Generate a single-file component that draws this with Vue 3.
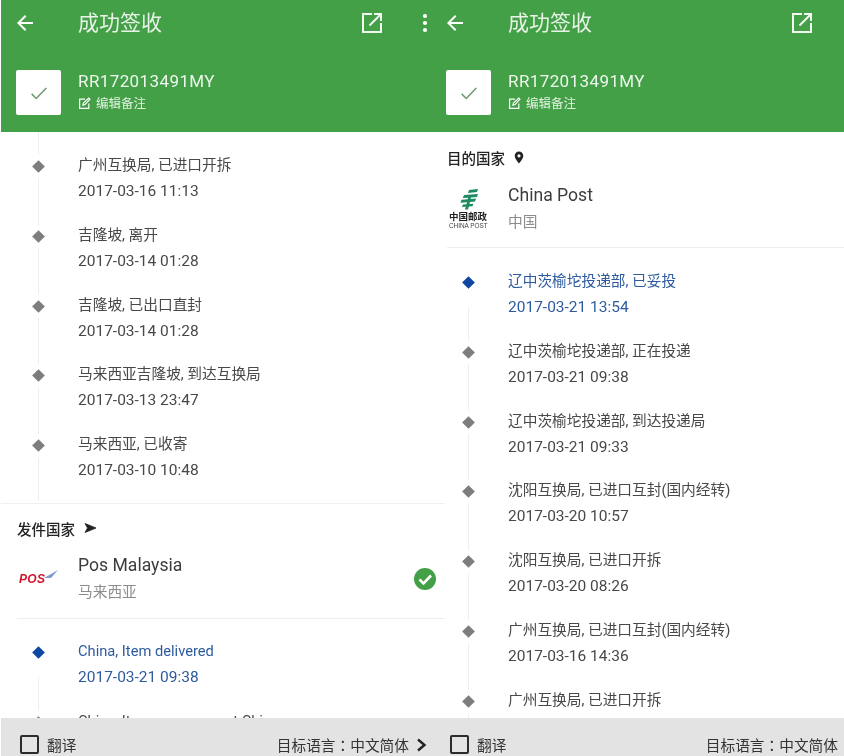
<script setup>
const leftTop = [
  { place: '广州互换局, 已进口开拆', time: '2017-03-16 11:13' },
  { place: '吉隆坡, 离开', time: '2017-03-14 01:28' },
  { place: '吉隆坡, 已出口直封', time: '2017-03-14 01:28' },
  { place: '马来西亚吉隆坡, 到达互换局', time: '2017-03-13 23:47' },
  { place: '马来西亚, 已收寄', time: '2017-03-10 10:48' }
]

const leftBottom = [
  { place: 'China, Item delivered', time: '2017-03-21 09:38', active: true },
  { place: 'China, Item necessary at China', time: '2017-03-21 08:00' }
]

const rightEvents = [
  { place: '辽中茨榆坨投递部, 已妥投', time: '2017-03-21 13:54', active: true },
  { place: '辽中茨榆坨投递部, 正在投递', time: '2017-03-21 09:38' },
  { place: '辽中茨榆坨投递部, 到达投递局', time: '2017-03-21 09:33' },
  { place: '沈阳互换局, 已进口互封(国内经转)', time: '2017-03-20 10:57' },
  { place: '沈阳互换局, 已进口开拆', time: '2017-03-20 08:26' },
  { place: '广州互换局, 已进口互封(国内经转)', time: '2017-03-16 14:36' },
  { place: '广州互换局, 已进口开拆', time: '2017-03-16 11:13' }
]
</script>

<template>
  <div class="page">
    <!-- left phone -->
    <section class="phone left">
      <header class="head">
        <div class="toolbar">
          <svg class="back" width="24" height="24" viewBox="0 0 24 24"><path d="M20 11H7.800l5.600-5.600L12 4l-8 8 8 8 1.400-1.400L7.800 13H20z" fill="#fff" /></svg>
          <h1>成功签收</h1>
          <svg class="open" width="24" height="24" viewBox="0 0 24 24"><path d="M20 20H4V4h8V2H2v20h20V12h-2zM14 2v2h4.600L8.800 13.800l1.400 1.400L20 5.400V10h2V2z" fill="#f1f8f1" /></svg>
          <svg class="more" width="6" height="20" viewBox="0 0 6 20"><circle cx="3" cy="3" r="2.100" fill="#fff" /><circle cx="3" cy="10" r="2.100" fill="#fff" /><circle cx="3" cy="17" r="2.100" fill="#fff" /></svg>
        </div>
        <div class="info">
          <div class="thumb">
            <svg width="22" height="22" viewBox="0 0 24 24"><path d="M4 13l5 5L20 6.500" fill="none" stroke="#6f9a72" stroke-width="1.700" /></svg>
          </div>
          <div>
            <div class="number">RR172013491MY</div>
            <div class="note">
              <svg width="13" height="13" viewBox="0 0 24 24"><path d="M20 12v9H3V4h10M9 15l1-4L20 2l2 2-9 10z" fill="none" stroke="#fff" stroke-width="2.200" /></svg>
              编辑备注
            </div>
          </div>
        </div>
      </header>

      <div class="body">
        <ul class="events first">
          <li v-for="e in leftTop" :key="e.place + e.time" class="event">
            <span class="dot"></span>
            <div class="place">{{ e.place }}</div>
            <div class="time">{{ e.time }}</div>
          </li>
        </ul>
        <div class="carrier-block sender">
          <div class="label">
            发件国家
            <svg width="13" height="12" viewBox="0 0 13 12"><path d="M1 1.500l11 4.500-11 4.500 2.500-4.500z" fill="#222" stroke="#222" stroke-width="0.800" /></svg>
          </div>
          <div class="carrier">
            <div class="logo malaysia">
              <span class="pos">POS</span>
              <svg class="wing" width="15" height="10" viewBox="0 0 15 10"><path d="M0 9L14 1 7 9z" fill="#7f9bcf" /></svg>
            </div>
            <div class="carrier-text">
              <div class="name">Pos Malaysia</div>
              <div class="country">马来西亚</div>
            </div>
            <svg class="ok" width="24" height="24" viewBox="0 0 24 24"><circle cx="12" cy="12" r="11" fill="#43a047" /><path d="M6.500 12.500l4 4 7.500-8" fill="none" stroke="#fff" stroke-width="2.600" /></svg>
          </div>
        </div>
        <ul class="events after-carrier">
          <li v-for="e in leftBottom" :key="e.place" class="event" :class="{ active: e.active }">
            <span class="dot"></span>
            <div class="place">{{ e.place }}</div>
            <div class="time">{{ e.time }}</div>
          </li>
        </ul>
      </div>

      <footer class="bar">
        <span class="box"></span>
        <span class="translate">翻译</span>
        <span class="target">目标语言：中文简体</span>
        <svg class="chev" width="12" height="14" viewBox="0 0 12 14"><path d="M2 1.500L8.500 7 2 12.500" fill="none" stroke="#222" stroke-width="2.400" /></svg>
      </footer>
    </section>

    <!-- right phone -->
    <section class="phone right">
      <header class="head">
        <div class="toolbar">
          <svg class="back" width="24" height="24" viewBox="0 0 24 24"><path d="M20 11H7.800l5.600-5.600L12 4l-8 8 8 8 1.400-1.400L7.800 13H20z" fill="#fff" /></svg>
          <h1>成功签收</h1>
          <svg class="open" width="24" height="24" viewBox="0 0 24 24"><path d="M20 20H4V4h8V2H2v20h20V12h-2zM14 2v2h4.600L8.800 13.800l1.400 1.400L20 5.400V10h2V2z" fill="#f1f8f1" /></svg>
        </div>
        <div class="info">
          <div class="thumb">
            <svg width="22" height="22" viewBox="0 0 24 24"><path d="M4 13l5 5L20 6.500" fill="none" stroke="#6f9a72" stroke-width="1.700" /></svg>
          </div>
          <div>
            <div class="number">RR172013491MY</div>
            <div class="note">
              <svg width="13" height="13" viewBox="0 0 24 24"><path d="M20 12v9H3V4h10M9 15l1-4L20 2l2 2-9 10z" fill="none" stroke="#fff" stroke-width="2.200" /></svg>
              编辑备注
            </div>
          </div>
        </div>
      </header>

      <div class="body">
        <div class="carrier-block">
          <div class="label">
            目的国家
            <svg width="10" height="13" viewBox="0 0 10 13"><path d="M5 .5A4.300 4.300 0 0 0 .7 4.800C.7 8 5 12.500 5 12.500S9.300 8 9.300 4.800A4.300 4.300 0 0 0 5 .5zm0 5.900a1.600 1.600 0 1 1 0-3.200 1.600 1.600 0 0 1 0 3.200z" fill="#222" /></svg>
          </div>
          <div class="carrier">
            <div class="logo cn">
              <svg width="24" height="22" viewBox="0 0 24 22"><path d="M12 1l9-1-1 3-9 1zM7 6l14-1-1 3-6 .4-.4 1.600 5.400-.4-1 3-5 .3-.6 2.100 4-.3-1 2.500-3.600.3-.8 3h-3l.8-2.800-3.800.3 1-2.500 3.500-.3.500-2-6.500.5 1-3 6.200-.4.400-1.600-5.300.4z" fill="#1f8a5f" /></svg>
              <span class="cn-name">中国邮政</span>
              <span class="cn-en">CHINA POST</span>
            </div>
            <div class="carrier-text">
              <div class="name">China Post</div>
              <div class="country">中国</div>
            </div>
          </div>
        </div>
        <ul class="events after-carrier">
          <li v-for="e in rightEvents" :key="e.place + e.time" class="event" :class="{ active: e.active }">
            <span class="dot"></span>
            <div class="place">{{ e.place }}</div>
            <div class="time">{{ e.time }}</div>
          </li>
        </ul>
      </div>

      <footer class="bar">
        <span class="box"></span>
        <span class="translate">翻译</span>
        <span class="target">目标语言：中文简体</span>
      </footer>
    </section>
  </div>
</template>

<style>
html, body {
  margin: 0;
  background: #fff;
}
</style>

<style scoped>
.page {
  display: flex;
  width: 844px;
  height: 756px;
  overflow: hidden;
  font-family: Roboto, "Noto Sans CJK SC", sans-serif;
  color: #484848;
  filter: blur(0.35px);
}

.phone {
  position: relative;
  display: flex;
  flex-direction: column;
  height: 756px;
  overflow: hidden;
  background: #fff;
}
.left {
  width: 444px;
  margin-left: 1px;
  --inset: 14px;
}
.right {
  width: 399px;
  --inset: 0px;
}

.head {
  flex: none;
  height: 132px;
  padding-left: var(--inset);
  background: #43a047;
  color: #fff;
}
.toolbar {
  display: flex;
  align-items: center;
  height: 46px;
}
.back {
  margin-left: -2px;
  flex: none;
}
.toolbar h1 {
  margin: 0 0 0 41px;
  font-size: 21px;
  font-weight: 400;
  line-height: 46px;
  width: 282px;
  flex: none;
  color: #e6f3e6;
}
.open {
  flex: none;
}
.more {
  flex: none;
  margin-left: 38px;
}

.info {
  display: flex;
  align-items: center;
  gap: 17px;
  padding: 24px 0 0 1px;
}
.thumb {
  display: flex;
  align-items: center;
  justify-content: center;
  width: 45px;
  height: 45px;
  border-radius: 2px;
  background: #fff;
}
.number {
  font-size: 17px;
  line-height: 22px;
  letter-spacing: 0.4px;
  margin-top: -2px;
  color: #eef7ee;
}
.note {
  display: flex;
  align-items: center;
  gap: 5px;
  margin-top: 2px;
  font-size: 12.500px;
  line-height: 20px;
  color: #e3f1e3;
}

.body {
  flex: 1;
  min-height: 0;
  overflow: hidden;
  padding-left: var(--inset);
}

.events {
  list-style: none;
  margin: 0;
  padding: 0;
}
.events.first {
  padding-top: 19px;
  padding-bottom: 3px;
  border-bottom: 1px solid #f0f0f0;
  margin-left: calc(0px - var(--inset));
  padding-left: var(--inset);
}
.events.after-carrier {
  padding-top: 19px;
}
.sender + .events.after-carrier {
  padding-top: 18px;
}
.event {
  position: relative;
  height: 69.800px;
  padding-left: 63px;
  box-sizing: border-box;
  padding-top: 1px;
}
.event::before {
  content: "";
  position: absolute;
  left: 23px;
  top: -19px;
  bottom: 0;
  width: 1px;
  background: #eeeeee;
}
.event.active::before {
  top: 40px;
}
.dot {
  position: absolute;
  left: 19px;
  top: 11px;
  width: 9px;
  height: 9px;
  background: #7d7d7d;
  transform: rotate(45deg);
  box-shadow: 0 0 0 4px #fff;
}
.place {
  font-size: 14.700px;
  line-height: 26px;
  white-space: nowrap;
}
.time {
  font-size: 15.500px;
  line-height: 26px;
}
.active .place,
.active .time {
  color: #2d5b9e;
}
.active .dot {
  background: #0d47a1;
}

.carrier-block {
  padding: 13px 0 0 2px;
}
.sender {
  padding-top: 12px;
}
.label {
  display: flex;
  align-items: center;
  gap: 9px;
  height: 25px;
  font-size: 14.500px;
  font-weight: 500;
  color: #222;
}
.carrier {
  display: flex;
  align-items: center;
  height: 78px;
  border-bottom: 1px solid #eee;
  box-sizing: border-box;
}
.logo {
  position: relative;
  flex: none;
  width: 61px;
  display: flex;
  flex-direction: column;
  align-items: flex-start;
}
.malaysia {
  padding-left: 2px;
  box-sizing: border-box;
}
.pos {
  font-family: "Liberation Sans", sans-serif;
  font-size: 12px;
  font-weight: 700;
  font-style: italic;
  letter-spacing: 0.3px;
  line-height: 14px;
  color: #d3142c;
}
.wing {
  position: absolute;
  top: -3px;
  left: 27px;
}
.cn {
  align-items: flex-start;
  padding-left: 2px;
  padding-top: 1px;
  width: 59px;
  margin-right: 2px;
  box-sizing: border-box;
}
.cn svg {
  margin-left: 8px;
}
.cn-name {
  font-size: 9.500px;
  font-weight: 700;
  line-height: 11px;
  color: #222;
  white-space: nowrap;
}
.cn-en {
  font-family: "Liberation Sans", sans-serif;
  font-size: 6.400px;
  line-height: 7px;
  color: #444;
  white-space: nowrap;
}
.carrier-text {
  flex: 1;
}
.name {
  font-size: 17.600px;
  line-height: 27px;
  color: #3c3c3c;
}
.country {
  font-size: 14.700px;
  line-height: 27px;
  color: #8c8c8c;
}
.ok {
  flex: none;
  margin-right: 8px;
}

.bar {
  position: absolute;
  left: 0;
  right: 0;
  bottom: 0;
  display: flex;
  align-items: center;
  height: 38px;
  padding: 15px 0 0 var(--inset);
  box-sizing: border-box;
  background: #e3e3e3;
  color: #333;
  font-size: 14.700px;
}
.box {
  flex: none;
  width: 15px;
  height: 15px;
  margin: 0 0 0 5px;
  border: 2px solid #2b2b2b;
  border-radius: 2px;
}
.translate {
  margin-left: 8px;
}
.target {
  margin-left: auto;
  margin-right: 7px;
  font-family: "Noto Sans CJK TC", sans-serif;
}
.right .target {
  margin-right: 6px;
}
.chev {
  flex: none;
  margin-right: 17px;
}
</style>
